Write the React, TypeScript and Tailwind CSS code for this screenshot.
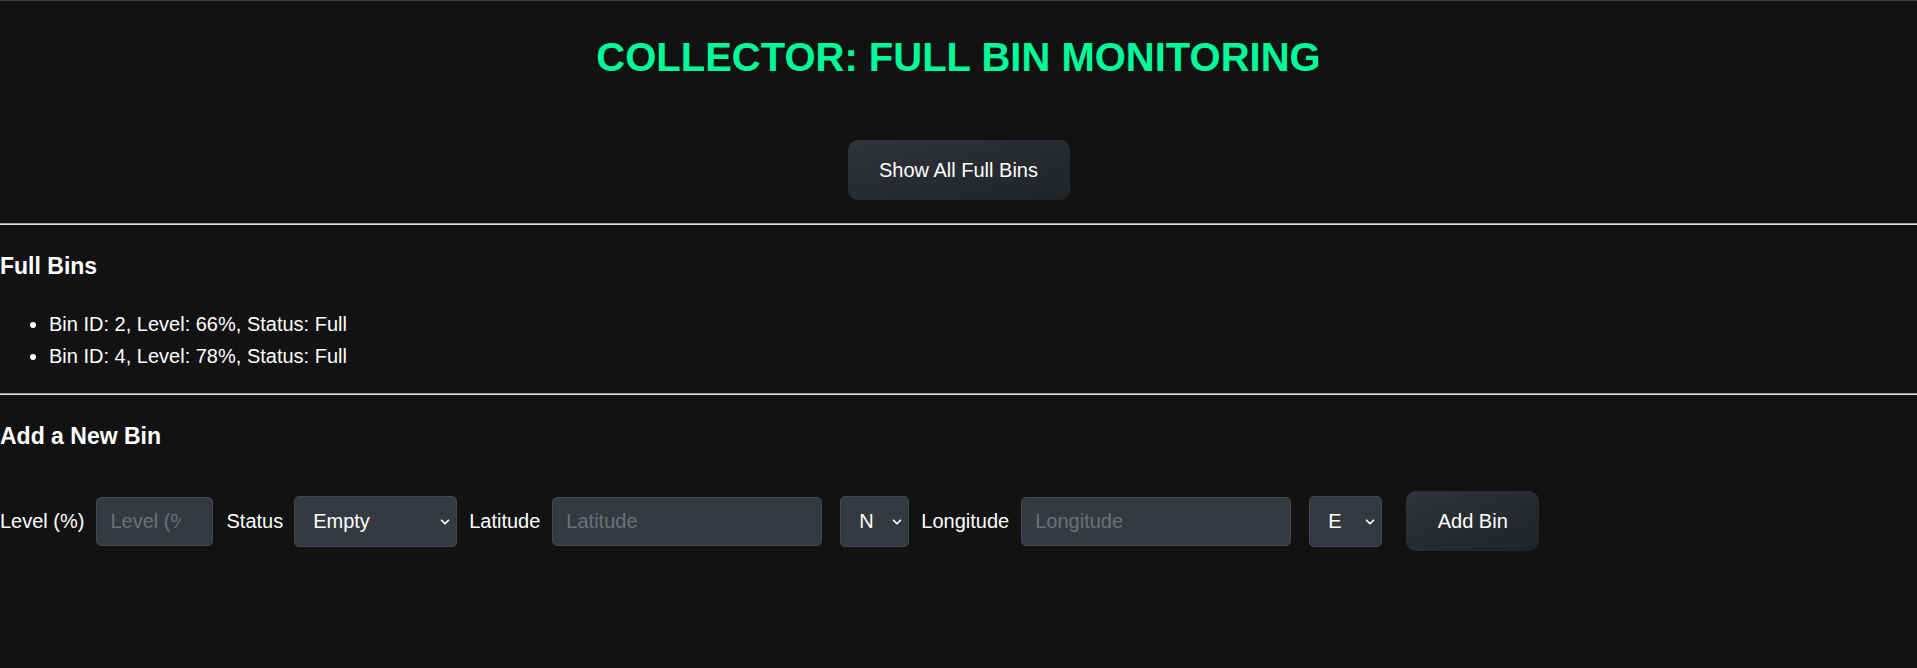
import { ChevronDown } from 'lucide-react'

const FULL_BINS = [
  { id: 2, level: 66, status: 'Full' },
  { id: 4, level: 78, status: 'Full' },
]

function Select({ value, options, width, ml }: { value: string; options: string[]; width: string; ml: string }) {
  return (
    <div className={`relative ${width} ${ml} h-[51px]`}>
      <select
        defaultValue={value}
        className="h-full w-full appearance-none rounded-[5px] border border-[#45494f] bg-[#343a40] pl-[18px] pr-[24px] text-[20px] text-white outline-none"
      >
        {options.map(o => (
          <option key={o} value={o}>{o}</option>
        ))}
      </select>
      <ChevronDown size={14} strokeWidth={3} className="pointer-events-none absolute right-[5px] top-[19px] text-white" />
    </div>
  )
}

export default function App() {
  return (
    <div className="min-h-screen border-t border-[#3a3a3a] bg-[#121212] text-white font-['Liberation_Sans',Arial,sans-serif]">
      {/* Header */}
      <h1 className="pt-[33px] text-center text-[40px] font-bold leading-[46px] text-[#00fa9a]">
        COLLECTOR: FULL BIN MONITORING
      </h1>

      <div className="mt-[60px] flex justify-center">
        <button className="h-[60px] w-[222px] rounded-[10px] bg-linear-to-br from-[#30343a] to-[#202327] text-[20px] text-white">
          Show All Full Bins
        </button>
      </div>

      <div className="mt-[23px] h-[2px] border-t border-b border-t-[#9c9c9c] border-b-[#e2e2e2]" />

      {/* Full bins */}
      <h2 className="mt-[28px] text-[23px] font-bold leading-[27px]">Full Bins</h2>
      <ul className="mt-[28px] list-disc pl-[49px] text-[20px] leading-[32px]">
        {FULL_BINS.map(b => (
          <li key={b.id}>
            Bin ID: {b.id}, Level: {b.level}%, Status: {b.status}
          </li>
        ))}
      </ul>

      <div className="mt-[21px] h-[2px] border-t border-b border-t-[#9c9c9c] border-b-[#e2e2e2]" />

      {/* Add bin form */}
      <h2 className="mt-[28px] text-[23px] font-bold leading-[27px]">Add a New Bin</h2>
      <div className="mt-[41px] flex items-center text-[20px] leading-[23px]">
        <label>Level (%)</label>
        <input
          placeholder="Level (%)"
          className="ml-[12px] h-[49px] w-[117px] rounded-[5px] border border-[#45494f] bg-[#343a40] pl-[13px] pr-[31px] text-[20px] text-white outline-none placeholder:text-[#6c7178]"
        />
        <label className="ml-[13px]">Status</label>
        <Select value="Empty" options={['Empty', 'Half', 'Full']} width="w-[163px]" ml="ml-[11px]" />
        <label className="ml-[12px]">Latitude</label>
        <input
          placeholder="Latitude"
          className="ml-[12px] h-[49px] w-[270px] rounded-[5px] border border-[#45494f] bg-[#343a40] pl-[13px] text-[20px] text-white outline-none placeholder:text-[#6c7178]"
        />
        <Select value="N" options={['N', 'S']} width="w-[69px]" ml="ml-[18px]" />
        <label className="ml-[12px]">Longitude</label>
        <input
          placeholder="Longitude"
          className="ml-[12px] h-[49px] w-[270px] rounded-[5px] border border-[#45494f] bg-[#343a40] pl-[13px] text-[20px] text-white outline-none placeholder:text-[#6c7178]"
        />
        <Select value="E" options={['E', 'W']} width="w-[73px]" ml="ml-[18px]" />
        <button className="ml-[24px] h-[60px] w-[133px] rounded-[10px] bg-linear-to-br from-[#30343a] to-[#202327] text-[20px] text-white">
          Add Bin
        </button>
      </div>
    </div>
  )
}
